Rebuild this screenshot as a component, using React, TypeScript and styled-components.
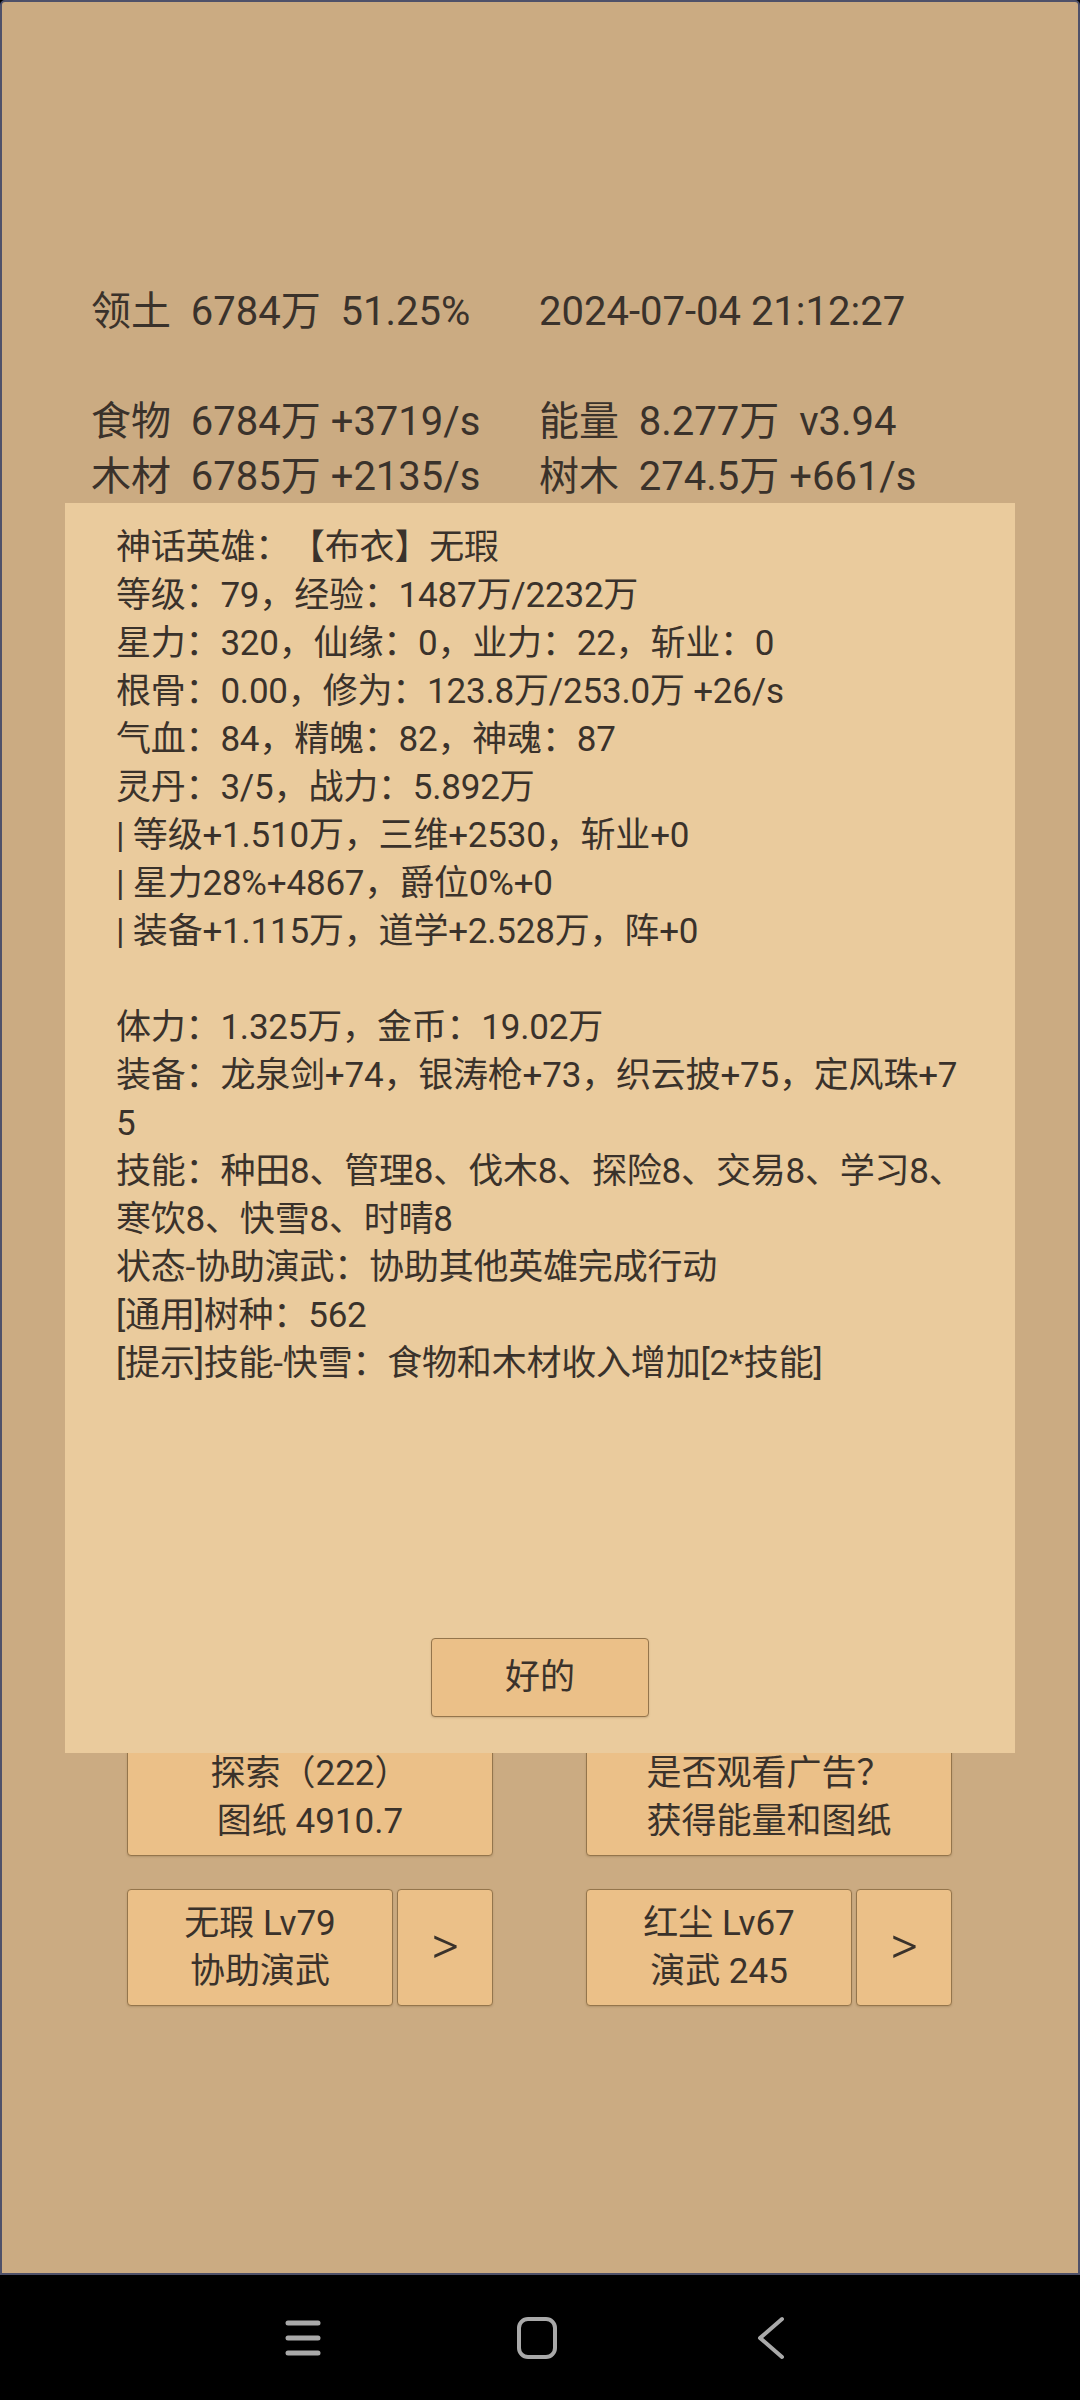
import * as React from 'react';
import styled, { createGlobalStyle } from 'styled-components';

const GlobalStyle = createGlobalStyle`
  html, body {
    margin: 0;
    padding: 0;
    background: #000;
  }
  body {
    font-family: Roboto, "Noto Sans CJK SC", sans-serif;
    color: #3a322b;
    text-spacing-trim: space-all;
  }
`;

const statsLeft = ['领土  6784万  51.25%', '', '食物  6784万 +3719/s', '木材  6785万 +2135/s'];
const statsRight = ['2024-07-04 21:12:27', '', '能量  8.277万  v3.94', '树木  274.5万 +661/s'];

const heroLines = [
	'神话英雄：【布衣】无瑕',
	'等级：79，经验：1487万/2232万',
	'星力：320，仙缘：0，业力：22，斩业：0',
	'根骨：0.00，修为：123.8万/253.0万 +26/s',
	'气血：84，精魄：82，神魂：87',
	'灵丹：3/5，战力：5.892万',
	'| 等级+1.510万，三维+2530，斩业+0',
	'| 星力28%+4867，爵位0%+0',
	'| 装备+1.115万，道学+2.528万，阵+0',
	'',
	'体力：1.325万，金币：19.02万',
	'装备：龙泉剑+74，银涛枪+73，织云披+75，定风珠+7',
	'5',
	'技能：种田8、管理8、伐木8、探险8、交易8、学习8、',
	'寒饮8、快雪8、时晴8',
	'状态-协助演武：协助其他英雄完成行动',
	'[通用]树种：562',
	'[提示]技能-快雪：食物和木材收入增加[2*技能]',
];

const App = () => {
	return (
		<Page>
			<GlobalStyle />
			<Screen>
				<Stats>
					{statsLeft.map((l, i) => (
						<React.Fragment key={i}>
							<StatLine>{l || '\u00a0'}</StatLine>
							<StatLine>{statsRight[i] || '\u00a0'}</StatLine>
						</React.Fragment>
					))}
				</Stats>

				<ActionGrid>
					<GameButton>
						探索（222）
						<br />
						图纸 4910.7
					</GameButton>
					<GameButton>
						是否观看广告？
						<br />
						获得能量和图纸
					</GameButton>
					<HeroCell>
						<GameButton $grow>
							无瑕 Lv79
							<br />
							协助演武
						</GameButton>
						<ArrowButton>&gt;</ArrowButton>
					</HeroCell>
					<HeroCell>
						<GameButton $grow>
							红尘 Lv67
							<br />
							演武 245
						</GameButton>
						<ArrowButton>&gt;</ArrowButton>
					</HeroCell>
				</ActionGrid>

				<Dialog>
					<DialogText>
						{heroLines.map((l, i) => (
							<DialogLine key={i}>{l || '\u00a0'}</DialogLine>
						))}
					</DialogText>
					<OkButton>好的</OkButton>
				</Dialog>
			</Screen>

			<NavBar>
				<NavSlot>
					<svg width="40" height="40" viewBox="0 0 40 40">
						<g stroke="#a9a9a9" strokeWidth="5" strokeLinecap="round">
							<line x1="5" y1="5" x2="35" y2="5" />
							<line x1="5" y1="20" x2="35" y2="20" />
							<line x1="5" y1="35" x2="35" y2="35" />
						</g>
					</svg>
				</NavSlot>
				<NavSlot>
					<svg width="42" height="44" viewBox="0 0 42 44">
						<rect x="3" y="3" width="36" height="38" rx="9" fill="none" stroke="#a9a9a9" strokeWidth="4" />
					</svg>
				</NavSlot>
				<NavSlot>
					<svg width="30" height="44" viewBox="0 0 30 44">
						<polyline points="26,3 4,22 26,41" fill="none" stroke="#a9a9a9" strokeWidth="4" strokeLinecap="round" strokeLinejoin="round" />
					</svg>
				</NavSlot>
			</NavBar>
		</Page>
	);
};
export default App;

const Page = styled.div`
  width: 1080px;
  height: 2400px;
  display: flex;
  flex-direction: column;
  background: #000;
`;

const Screen = styled.div`
  position: relative;
  box-sizing: border-box;
  height: 2275px;
  background: #cbab82;
  border: 2px solid #4f5169;
  border-radius: 5px 5px 0 0;
  overflow: hidden;
`;

const Stats = styled.div`
  display: grid;
  grid-template-columns: 448px 1fr;
  padding: 282px 0 0 89px;
  font-size: 40px;
  line-height: 55px;
`;

const StatLine = styled.div`
  white-space: pre;
`;

const ActionGrid = styled.div`
  display: grid;
  grid-template-columns: 366px 366px;
  grid-auto-rows: 117px;
  column-gap: 93px;
  row-gap: 33px;
  margin-top: 1235px;
  padding-left: 125px;
`;

const GameButton = styled.div<{ $grow?: boolean }>`
  box-sizing: border-box;
  display: flex;
  flex-direction: column;
  align-items: center;
  justify-content: center;
  text-align: center;
  background: #ebc088;
  border: 1px solid #94754c;
  border-radius: 4px;
  box-shadow: 0 1px 2px rgba(80, 60, 30, 0.2);
  font-size: 35px;
  line-height: 48px;
  ${(p) => (p.$grow ? 'flex: 1;' : '')}
`;

const HeroCell = styled.div`
  display: flex;
  gap: 4px;
`;

const ArrowButton = styled(GameButton)`
  width: 96px;
  flex: none;
  font-size: 54px;
  font-weight: 300;
  line-height: 60px;
  padding-bottom: 4px;
`;

const Dialog = styled.div`
  position: absolute;
  left: 63px;
  top: 501px;
  width: 950px;
  height: 1250px;
  box-sizing: border-box;
  background: #eacb9d;
  display: flex;
  flex-direction: column;
  align-items: center;
  padding-bottom: 36px;
`;

const DialogText = styled.div`
  align-self: stretch;
  padding: 21px 0 0 51px;
  font-size: 35px;
  line-height: 48px;
  letter-spacing: -0.2px;
`;

const DialogLine = styled.div`
  white-space: pre;
`;

const OkButton = styled(GameButton)`
  margin-top: auto;
  width: 218px;
  height: 79px;
`;

const NavBar = styled.div`
  flex: 1;
  display: flex;
  justify-content: center;
  align-items: center;
  padding-right: 6px;
`;

const NavSlot = styled.div`
  width: 234px;
  display: flex;
  justify-content: center;
  align-items: center;
`;
